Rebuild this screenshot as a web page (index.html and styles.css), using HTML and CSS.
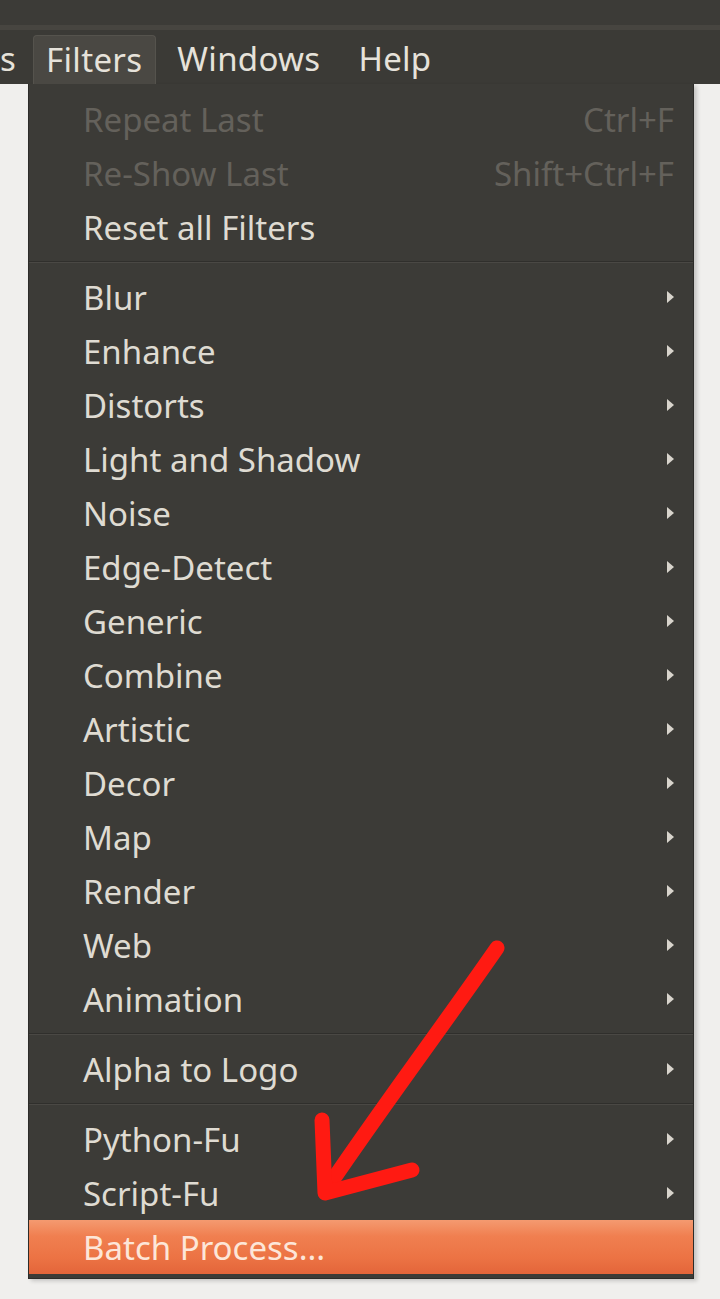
FILE: index.html
```html
<!DOCTYPE html>
<html>
<head>
<meta charset="utf-8">
<link rel="stylesheet" href="styles.css">
</head>
<body>
<div class="titlebar"></div>
<div class="menubar">
  <span class="mb-item cut">s</span>
  <span class="mb-item active">Filters</span>
  <span class="mb-item win">Windows</span>
  <span class="mb-item help">Help</span>
</div>
<div class="stage">
  <div class="menu">
    <div class="item disabled"><span class="label">Repeat Last</span><span class="accel">Ctrl+F</span></div>
    <div class="item disabled"><span class="label">Re-Show Last</span><span class="accel">Shift+Ctrl+F</span></div>
    <div class="item"><span class="label">Reset all Filters</span></div>
    <div class="sep"></div>
    <div class="item sub"><span class="label">Blur</span><span class="tri"></span></div>
    <div class="item sub"><span class="label">Enhance</span><span class="tri"></span></div>
    <div class="item sub"><span class="label">Distorts</span><span class="tri"></span></div>
    <div class="item sub"><span class="label">Light and Shadow</span><span class="tri"></span></div>
    <div class="item sub"><span class="label">Noise</span><span class="tri"></span></div>
    <div class="item sub"><span class="label">Edge-Detect</span><span class="tri"></span></div>
    <div class="item sub"><span class="label">Generic</span><span class="tri"></span></div>
    <div class="item sub"><span class="label">Combine</span><span class="tri"></span></div>
    <div class="item sub"><span class="label">Artistic</span><span class="tri"></span></div>
    <div class="item sub"><span class="label">Decor</span><span class="tri"></span></div>
    <div class="item sub"><span class="label">Map</span><span class="tri"></span></div>
    <div class="item sub"><span class="label">Render</span><span class="tri"></span></div>
    <div class="item sub"><span class="label">Web</span><span class="tri"></span></div>
    <div class="item sub"><span class="label">Animation</span><span class="tri"></span></div>
    <div class="sep"></div>
    <div class="item sub"><span class="label">Alpha to Logo</span><span class="tri"></span></div>
    <div class="sep"></div>
    <div class="item sub"><span class="label">Python-Fu</span><span class="tri"></span></div>
    <div class="item sub"><span class="label">Script-Fu</span><span class="tri"></span></div>
    <div class="item hl"><span class="label">Batch Process...</span></div>
  </div>
</div>
<svg class="arrow" width="720" height="1299" viewBox="0 0 720 1299">
  <g fill="none" stroke="#ff1a12" stroke-width="15" stroke-linecap="round" stroke-linejoin="round">
    <path d="M497 948 C440 1030 380 1110 326 1190"/>
    <path d="M322 1120 L325 1193 L412 1170"/>
  </g>
</svg>
</body>
</html>
```
FILE: styles.css
```css
html, body {
  margin: 0;
  padding: 0;
}
body {
  width: 720px;
  height: 1299px;
  background: #f0efed;
  font-family: "Noto Sans", "Open Sans", sans-serif;
  position: relative;
  overflow: hidden;
}
.titlebar {
  height: 25px;
  background: #3c3b37;
  border-bottom: 5px solid #474540;
}
.menubar {
  height: 54px;
  background: #3b3a36;
  display: flex;
  align-items: center;
  overflow: hidden;
}
.mb-item {
  font-size: 33px;
  color: #e6e2da;
  padding: 0 13px;
  height: 49px;
  margin-top: 5px;
  line-height: 48px;
  box-sizing: border-box;
  letter-spacing: 0.3px;
}
.mb-item.cut {
  padding: 0;
  margin-left: 0;
  margin-right: 17px;
}
.mb-item.active {
  background: #4a4843;
  border: 1px solid #55534d;
  border-bottom: none;
  border-radius: 4px 4px 0 0;
  padding: 0 13px 0 12px;
}
.mb-item.win {
  margin-left: 8px;
}
.mb-item.help {
  margin-left: 12px;
}
.stage {
  padding-left: 28px;
}
.menu {
  width: 664px;
  background: #3c3b37;
  border: 1px solid #2d2c29;
  border-top: none;
  padding: 8px 0 4px;
  box-shadow: 3px 2px 4px rgba(0,0,0,0.18);
}
.item {
  height: 54px;
  display: flex;
  align-items: center;
  justify-content: space-between;
  padding: 0 19px 0 54px;
  font-size: 33px;
  color: #dfdbd2;
  white-space: nowrap;
}
.item.disabled {
  color: #64615b;
}
.item .accel {
  color: #64615b;
}
.tri {
  width: 0;
  height: 0;
  border-top: 6px solid transparent;
  border-bottom: 6px solid transparent;
  border-left: 7px solid #d8d4cc;
}
.sep {
  height: 16px;
  display: flex;
  flex-direction: column;
  justify-content: center;
}
.sep::before {
  content: "";
  display: block;
  height: 1px;
  background: #302f2c;
}
.sep::after {
  content: "";
  display: block;
  height: 1px;
  background: #4a4844;
}
.item.hl {
  background: linear-gradient(#f49a70 0%, #f07f50 30%, #ec7344 70%, #e4653a 100%);
  color: #fde6d8;
}
.arrow {
  position: absolute;
  left: 0;
  top: 0;
  pointer-events: none;
}
```
